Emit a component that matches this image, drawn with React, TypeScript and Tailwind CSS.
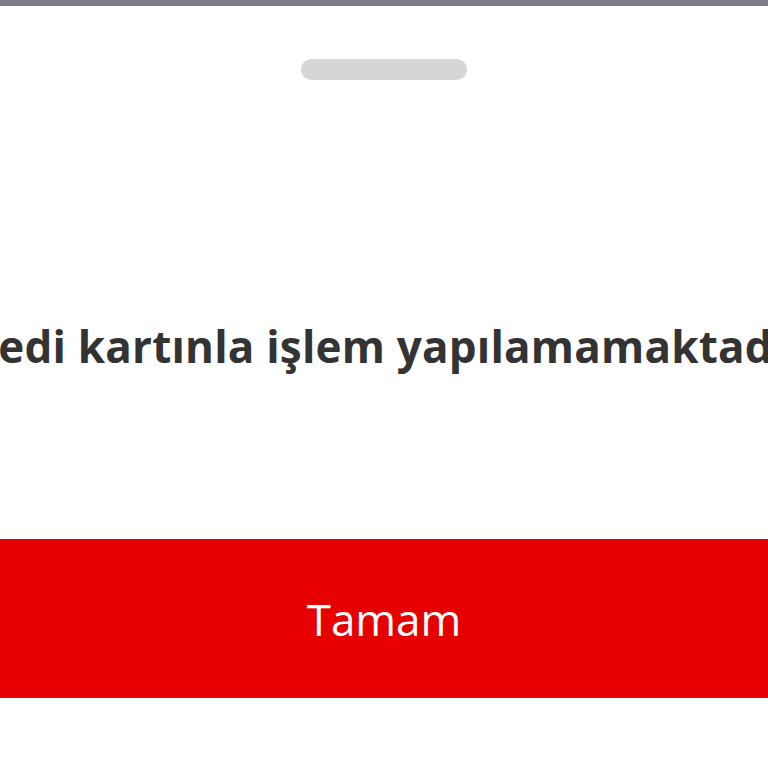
export default function App() {
  return (
    <div className="flex h-[768px] w-[768px] flex-col overflow-hidden bg-white font-['Open_Sans',sans-serif]">
      {/* Status strip */}
      <div className="h-[6px] w-full bg-[#7f7b89]" />

      {/* Sheet handle */}
      <div className="mx-auto mt-[53px] h-[21px] w-[166px] rounded-full bg-[#d6d6d6]" />

      {/* Message */}
      <div className="mt-[236px] flex h-[60px] w-full justify-center overflow-hidden">
        <p className="whitespace-nowrap text-[44px] font-bold leading-[60px] tracking-[0.2px] text-[#333333]">
          Kredi kartınla işlem yapılamamaktadır.
        </p>
      </div>

      {/* Action */}
      <button className="mt-[163px] flex h-[159px] w-full items-center justify-center bg-[#e60000] text-[44px] font-normal text-white">
        Tamam
      </button>
    </div>
  );
}
